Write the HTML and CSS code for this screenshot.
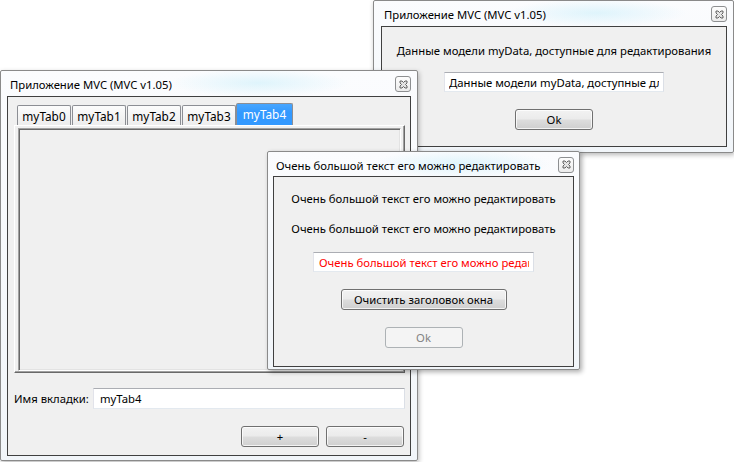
FILE: index.html
```html
<!DOCTYPE html>
<html lang="ru">
<head>
<meta charset="utf-8">
<title>Приложение MVC</title>
<link rel="stylesheet" href="styles.css">
</head>
<body>
<div class="desktop">

  <section class="win win-data">
    <header class="titlebar">
      <span class="title">Приложение MVC (MVC v1.05)</span>
      <span class="close"><svg width="9" height="9" viewBox="0 0 9 9"><path d="M1 1H3L4.5 2.5L6 1H8V3L6.5 4.5L8 6V8H6L4.5 6.5L3 8H1V6L2.5 4.5L1 3Z" fill="#e4e4e4" stroke="#555" stroke-width="0.9" stroke-linejoin="miter"/></svg></span>
    </header>
    <div class="client dialog-client data-client">
      <div class="label">Данные модели myData, доступные для редактирования</div>
      <input class="field field-data" type="text" value="Данные модели myData, доступные для редактирования" readonly>
      <button class="btn btn-ok">Ok</button>
    </div>
  </section>

  <section class="win win-main">
    <header class="titlebar">
      <span class="title">Приложение MVC (MVC v1.05)</span>
      <span class="close"><svg width="9" height="9" viewBox="0 0 9 9"><path d="M1 1H3L4.5 2.5L6 1H8V3L6.5 4.5L8 6V8H6L4.5 6.5L3 8H1V6L2.5 4.5L1 3Z" fill="#e4e4e4" stroke="#555" stroke-width="0.9" stroke-linejoin="miter"/></svg></span>
    </header>
    <div class="client main-client">
      <div class="tabs">
        <div class="tabbar">
          <span class="tab">myTab0</span>
          <span class="tab">myTab1</span>
          <span class="tab">myTab2</span>
          <span class="tab">myTab3</span>
          <span class="tab tab-active">myTab4</span>
        </div>
        <div class="pane">
          <div class="sunken"></div>
        </div>
      </div>
      <div class="form-row">
        <label class="form-label" for="tabname">Имя вкладки:</label>
        <input id="tabname" class="field field-main" type="text" value="myTab4" readonly>
      </div>
      <div class="btn-row">
        <button class="btn">+</button>
        <button class="btn">-</button>
      </div>
    </div>
  </section>

  <section class="win win-big">
    <header class="titlebar">
      <span class="title">Очень большой текст его можно редактировать</span>
      <span class="close"><svg width="9" height="9" viewBox="0 0 9 9"><path d="M1 1H3L4.5 2.5L6 1H8V3L6.5 4.5L8 6V8H6L4.5 6.5L3 8H1V6L2.5 4.5L1 3Z" fill="#e4e4e4" stroke="#555" stroke-width="0.9" stroke-linejoin="miter"/></svg></span>
    </header>
    <div class="client dialog-client big-client">
      <div class="label">Очень большой текст его можно редактировать</div>
      <div class="label label-second">Очень большой текст его можно редактировать</div>
      <input class="field field-big" type="text" value="Очень большой текст его можно редактировать" readonly>
      <button class="btn btn-wide">Очистить заголовок окна</button>
      <button class="btn btn-ok btn-disabled" disabled>Ok</button>
    </div>
  </section>

</div>
</body>
</html>
```

FILE: styles.css
```css
* {
  box-sizing: border-box;
}

html, body {
  margin: 0;
  padding: 0;
  background: #ffffff;
}

body {
  font-family: "Noto Sans", "Open Sans", "DejaVu Sans", sans-serif;
  font-size: 11.3px;
  color: #000000;
}

.desktop {
  position: relative;
  width: 734px;
  height: 462px;
  overflow: hidden;
  background: #ffffff;
}

/* ---------- window frame ---------- */
.win {
  position: absolute;
  display: flex;
  flex-direction: column;
  border: 1px solid #8a8a8a;
  border-radius: 2px;
  background:
    radial-gradient(ellipse 90px 14px at 62% 12px, rgba(200, 238, 250, 0.55), rgba(200, 238, 250, 0) 100%),
    linear-gradient(#fbfcfe, #f1f5f9);
  box-shadow: 1px 2px 5px rgba(0, 0, 0, 0.28);
}

.titlebar {
  flex: none;
  display: flex;
  align-items: center;
  justify-content: space-between;
  padding-top: 2px;
}

.title {
  padding-left: 3px;
  white-space: nowrap;
  color: #000000;
}

.close {
  flex: none;
  width: 16px;
  height: 16px;
  margin-top: -1px;
  border: 1px solid #8d8f91;
  border-radius: 3px;
  background: linear-gradient(#fdfdfd, #ececec);
  display: flex;
  align-items: center;
  justify-content: center;
}

.client {
  flex: 1;
  border: 1px solid #404040;
  background: #f0f0f0;
  display: flex;
  flex-direction: column;
}

/* ---------- positions on the desktop ---------- */
.win-data {
  left: 373px;
  top: 0;
  width: 361px;
  height: 153px;
  padding: 0 6px 5px 7px;
}

.win-data .titlebar {
  height: 25px;
}

.win-main {
  left: 0;
  top: 70px;
  width: 418px;
  height: 391px;
  padding: 0 6px 4px 6px;
}

.win-main .titlebar {
  height: 25px;
}

.win-big {
  left: 267px;
  top: 151px;
  width: 313px;
  height: 219px;
  padding: 0 5px 2px 5px;
  box-shadow: 2px 2px 5px rgba(0, 0, 0, 0.33);
}

.win-big .titlebar {
  height: 24px;
}

/* ---------- dialog content ---------- */
.dialog-client {
  align-items: center;
}

.label {
  height: 16px;
  line-height: 16px;
  white-space: nowrap;
}

.data-client {
  padding-top: 16px;
}

.data-client .field {
  margin-top: 13px;
}

.data-client .btn-ok {
  margin-top: 17px;
}

.big-client {
  padding-top: 14px;
}

.big-client .label-second {
  margin-top: 14px;
}

.big-client .field {
  margin-top: 15px;
}

.big-client .btn-wide {
  margin-top: 17px;
}

.big-client .btn-ok {
  margin-top: 17px;
}

/* ---------- fields ---------- */
.field {
  display: block;
  height: 20px;
  padding: 0 4px;
  border: 1px solid #e3e9ef;
  border-top-color: #abadb3;
  border-left-color: #e2e3ea;
  border-right-color: #dbdfe6;
  background: #ffffff;
  font: inherit;
  color: #000000;
  outline: none;
}

.field-data {
  width: 220px;
}

.field-big {
  width: 221px;
  color: #ff0000;
  padding-left: 5px;
}

.field-main {
  width: 100%;
  height: 21px;
  padding-left: 6px;
}

/* ---------- buttons ---------- */
.btn {
  width: 78px;
  height: 21px;
  padding: 0;
  border: 1px solid #707070;
  border-radius: 3px;
  background: linear-gradient(#f2f2f2 0%, #ebebeb 48%, #dddddd 52%, #cfcfcf 100%);
  box-shadow: inset 0 0 0 1px rgba(255, 255, 255, 0.75);
  font: inherit;
  color: #000000;
  line-height: 19px;
}

.btn-wide {
  width: 166px;
}

.btn-disabled {
  border-color: #adb2b5;
  background: #f4f4f4;
  box-shadow: none;
  color: #838383;
}

/* ---------- main window content ---------- */
.main-client {
  padding: 6px 5px 8px 6px;
}

.tabs {
  height: 270px;
  display: flex;
  flex-direction: column;
}

.tabbar {
  height: 22px;
  flex: none;
  display: flex;
  align-items: flex-end;
  padding-left: 3px;
}

.tab {
  width: 54px;
  height: 20px;
  margin-right: 1px;
  border: 1px solid #8c8e94;
  border-bottom: none;
  border-radius: 2px 2px 0 0;
  background: linear-gradient(#fcfcfc, #ededed);
  text-align: center;
  line-height: 20px;
  white-space: nowrap;
  font-size: 11.8px;
}

.tab-active {
  width: 57px;
  height: 22px;
  margin-left: -1px;
  margin-right: 0;
  background: linear-gradient(#48a6ff, #3399ff 40%);
  color: #ffffff;
  line-height: 20px;
}

.pane {
  flex: 1;
  display: flex;
  padding: 2px 3px 1px 3px;
  border-top: 1px solid #ffffff;
  border-left: 1px solid #ffffff;
  border-right: 1px solid #696969;
  border-bottom: 1px solid #696969;
  box-shadow: inset -1px -1px 0 #a0a0a0;
}

.sunken {
  flex: 1;
  border-top: 1px solid #a0a0a0;
  border-left: 1px solid #a0a0a0;
  border-right: 1px solid #ffffff;
  border-bottom: 1px solid #ffffff;
  box-shadow: inset 1px 1px 0 #696969, inset -1px -1px 0 #e3e3e3;
  background: #f0f0f0;
}

.form-row {
  margin-top: 15px;
  display: grid;
  grid-template-columns: 79px 1fr;
  align-items: center;
}

.form-label {
  white-space: nowrap;
}

.btn-row {
  margin-top: 17px;
  display: flex;
  justify-content: flex-end;
  gap: 7px;
  padding-right: 1px;
}
```
